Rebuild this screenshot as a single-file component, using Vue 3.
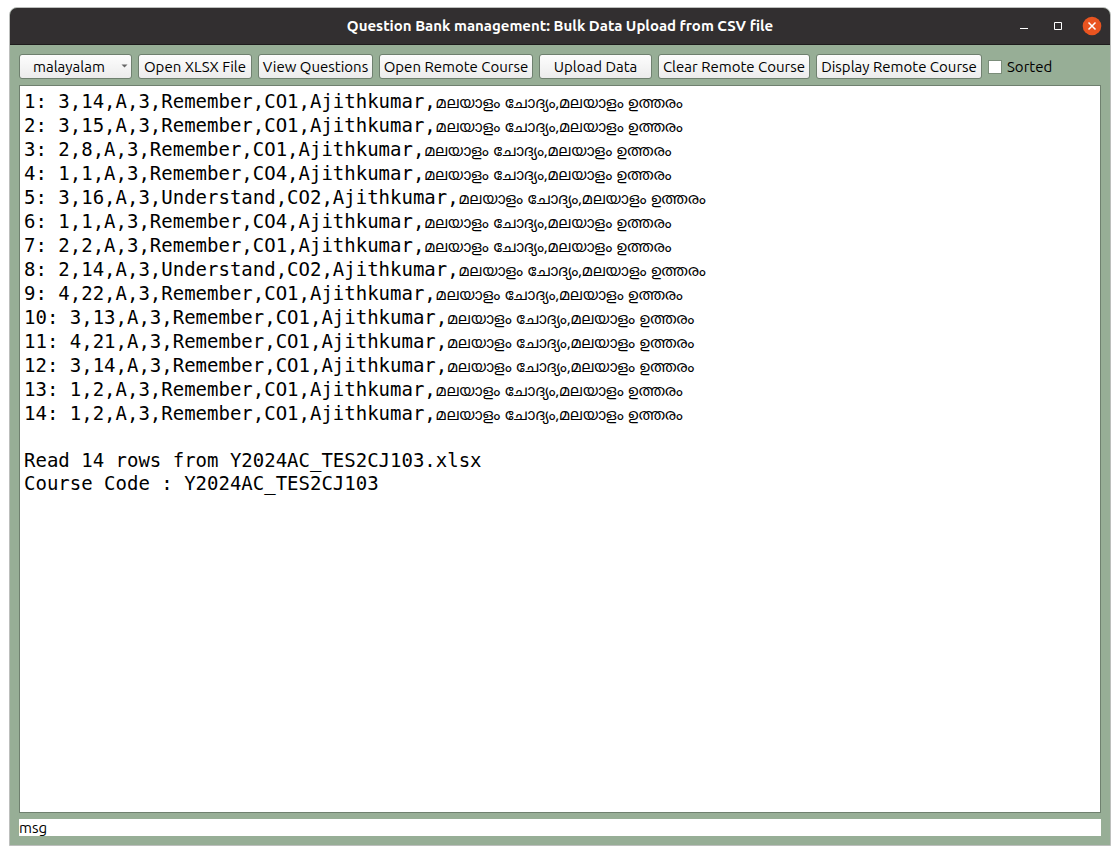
<script setup>
import { ref } from 'vue'

const language = ref('malayalam')
const sorted = ref(false)
const actions = [
  { label: 'Open XLSX File', size: 'w114' },
  { label: 'View Questions', size: 'w115' },
  { label: 'Open Remote Course', size: 'w154' },
  { label: 'Upload Data', size: 'w113' },
  { label: 'Clear Remote Course', size: 'w152' },
  { label: 'Display Remote Course', size: 'w166' },
]
const rows = [
  '3,14,A,3,Remember,CO1',
  '3,15,A,3,Remember,CO1',
  '2,8,A,3,Remember,CO1',
  '1,1,A,3,Remember,CO4',
  '3,16,A,3,Understand,CO2',
  '1,1,A,3,Remember,CO4',
  '2,2,A,3,Remember,CO1',
  '2,14,A,3,Understand,CO2',
  '4,22,A,3,Remember,CO1',
  '3,13,A,3,Remember,CO1',
  '4,21,A,3,Remember,CO1',
  '3,14,A,3,Remember,CO1',
  '1,2,A,3,Remember,CO1',
  '1,2,A,3,Remember,CO1',
]
const question = 'മലയാളം ചോദ്യം'
const answer = 'മലയാളം ഉത്തരം'
</script>

<template>
  <div class="desktop">
    <main class="window">
      <header class="titlebar">
        <h1>Question Bank management: Bulk Data Upload from CSV file</h1>
        <div class="controls">
          <button type="button" aria-label="Minimize">
            <svg width="20" height="20" viewBox="0 0 20 20"><path d="M6 12.5h8" stroke="#fff" /></svg>
          </button>
          <button type="button" aria-label="Maximize">
            <svg width="20" height="20" viewBox="0 0 20 20"><path d="M6.5 6.5h7v7h-7z" fill="none" stroke="#fff" /></svg>
          </button>
          <button type="button" aria-label="Close">
            <svg width="20" height="20" viewBox="0 0 20 20">
              <circle cx="10" cy="10" r="9.3" fill="#e95420" />
              <path d="M6.5 6.5l7 7M13.5 6.5l-7 7" stroke="#fff" stroke-width="1.5" />
            </svg>
          </button>
        </div>
      </header>
      <div class="content">
        <div class="toolbar">
          <div class="combo">
            <select v-model="language" aria-label="Language">
              <option>malayalam</option>
              <option>english</option>
            </select>
            <svg class="arrow" width="7" height="4" viewBox="0 0 7 4"><path d="M0.5 0.5h6l-3 3z" fill="#666" /></svg>
          </div>
          <button v-for="a in actions" :key="a.label" type="button" class="btn" :class="a.size">{{ a.label }}</button>
          <label class="check"><input v-model="sorted" type="checkbox" />Sorted</label>
        </div>
        <section class="output" aria-label="Output">
          <p v-for="(r, i) in rows" :key="i" class="row">{{ i + 1 }}: {{ r }},Ajithkumar,<span lang="ml">{{ question }},{{ answer }}</span></p>
          <p class="summary">Read 14 rows from Y2024AC_TES2CJ103.xlsx</p>
          <p>Course Code : Y2024AC_TES2CJ103</p>
        </section>
        <footer class="status" role="status">msg</footer>
      </div>
    </main>
  </div>
</template>

<style>
body {
  background: #fff;
}
</style>

<style scoped>
* {
  box-sizing: border-box;
}
.desktop {
  display: flex;
  min-height: 100vh;
  padding: 7px 9px 9px;
  font-family: Ubuntu, "Noto Sans", "Open Sans", sans-serif;
  font-size: 15px;
  color: #000;
}
.window {
  flex: 1;
  min-width: 0;
  display: flex;
  flex-direction: column;
  border: 1px solid #bdbfbd;
  border-radius: 8px 8px 0 0;
  background: #97ae96;
  overflow: hidden;
}
.titlebar {
  position: relative;
  display: flex;
  align-items: center;
  justify-content: center;
  height: 37px;
  background: #322f30;
  border-bottom: 1px solid #1e1c1c;
}
h1 {
  margin: 0;
  font-size: 15px;
  line-height: 20px;
  font-weight: 700;
  color: #fff;
}
.controls {
  position: absolute;
  right: 8px;
  top: 8px;
  display: flex;
  gap: 14px;
}
.controls button {
  display: flex;
  padding: 0;
  border: 0;
  background: none;
}
.content {
  flex: 1;
  display: flex;
  flex-direction: column;
  gap: 6px;
  padding: 9px;
}
.toolbar {
  display: flex;
  align-items: center;
  gap: 6px;
}
.combo {
  position: relative;
  width: 113px;
}
select,
.btn {
  height: 25px;
  padding: 0;
  border: 1px solid #6f806f;
  border-radius: 3px;
  background: linear-gradient(#fdfdfd, #ececec);
  font: inherit;
  color: #000;
  white-space: nowrap;
}
select {
  appearance: none;
  display: block;
  width: 100%;
  padding-left: 13px;
}
.arrow {
  position: absolute;
  right: 4px;
  top: 10px;
  pointer-events: none;
}
.w113 { width: 113px; }
.w114 { width: 114px; }
.w115 { width: 115px; }
.w152 { width: 152px; }
.w154 { width: 154px; }
.w166 { width: 166px; }
.check {
  display: flex;
  align-items: center;
  gap: 5px;
}
.check input {
  appearance: none;
  width: 14px;
  height: 14px;
  margin: 0;
  border: 1px solid #7b8d7a;
  background: #fff;
}
.check input:checked {
  background: #444;
}
.output {
  flex: 1;
  padding: 3px 4px;
  border: 1px solid #6f806f;
  background: #fff;
  font-family: "DejaVu Sans Mono", monospace;
  font-size: 19px;
  line-height: 23px;
  white-space: nowrap;
  overflow: auto;
}
p {
  margin: 0;
}
.row {
  height: 24px;
  line-height: 24px;
}
.row span {
  font-family: "Noto Sans Malayalam", Manjari, Meera, sans-serif;
  font-size: 15px;
}
.summary {
  margin-top: 24px;
}
.status {
  height: 17px;
  line-height: 18px;
  background: #fff;
}
</style>
